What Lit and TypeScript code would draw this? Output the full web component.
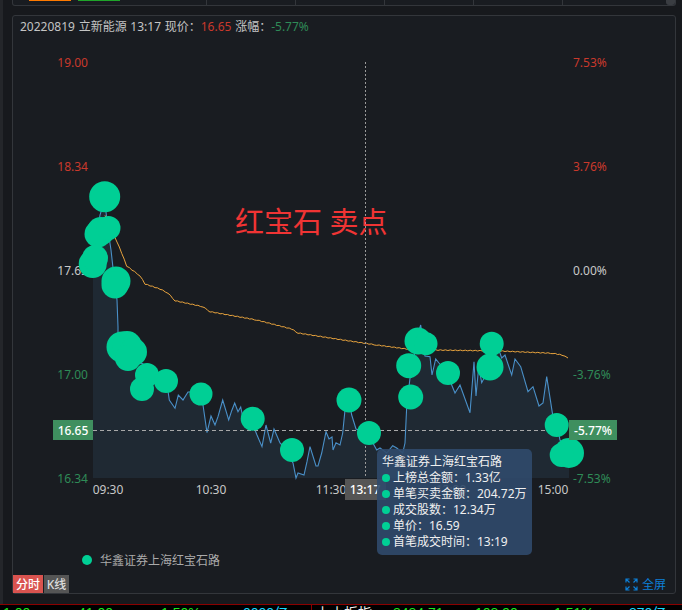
import { LitElement, html, css, svg } from "lit";
import { customElement } from "lit/decorators.js";

const price: number[][] = [[93,265],[96,240],[100,215],[103,205],[105,196],[106,212],[108,230],[111,250],[113,268],[115,285],[117,300],[118,327],[118,345],[125,352],[135,360],[147,366],[150,368],[156,375],[166,380],[168,391],[169.3,400],[175,408.3],[178.3,395],[183,400],[188,392],[193,392],[201,394],[203,405],[207,432.7],[211,416],[215,425],[218,416.7],[222.7,400],[228.7,420],[231.7,410.7],[234.7,403],[238,411.7],[240.7,407],[243,418],[252,420],[255,430],[257,435],[262,446.7],[266,425],[270.7,443],[274,429],[280,443],[285,448],[293,463],[296,478],[298,473],[304,475],[307,461.7],[310,446.7],[316,466],[318,466],[321.7,453],[326,431.7],[329,439],[332,437],[333,450],[336,442.7],[340,445],[342.7,433],[345,410],[349,400],[351.7,415],[356,429],[369,433],[374,445],[376.7,450],[380,448],[386.7,453],[392.7,445.7],[396.7,448],[402.7,453],[405,443],[406.7,406.7],[410,378],[411.7,376.7],[416,340],[420.7,325],[425,356],[430,356.7],[432,375],[435.7,359],[439,363],[448,373],[451.7,385],[455,393],[460,385],[470,412.7],[474,361.7],[476,396],[478.7,366.7],[481.7,382.7],[490,367],[495,345],[500,353],[501.7,358],[505,355],[511.7,375],[515,359],[520.7,366.7],[528,391.7],[533,386.7],[539,406],[543,403],[546.7,376.7],[552.7,415],[557,425],[560,440],[569,453]];

const avgKnots: number[][] = [[105,215],[117,241.7],[121.7,253],[126.7,266],[140,275.7],[145,284],[160,289],[168,293],[175,300.7],[203,306.7],[210,311.7],[240,317],[256.7,320],[291.7,329],[298,333],[343,340],[376.7,345],[406.7,349],[433,350],[500,351],[553,353.3],[562,355],[568,358]];

// The average line in the reference climbs in small steps, so each knot span is cut into short stepped runs.
const avg: number[][] = avgKnots.flatMap((p, i) => {
  const next = avgKnots[i + 1];
  if (!next) return [p];
  const out: number[][] = [];
  const n = Math.max(1, Math.round((next[0] - p[0]) / 2.5));
  for (let k = 0; k < n; k++) {
    const x = p[0] + ((next[0] - p[0]) * k) / n;
    const y = p[1] + ((next[1] - p[1]) * k) / n;
    out.push([x, y + (k % 2 === 0 ? 0.35 : -0.35)]);
  }
  return out;
});

const bubbles: number[][] = [[104.7,196.7,15.5],[98,234,13.5],[101,231,14],[108.5,228,12],[92.7,264,14],[95,258,13],[116,281,14.5],[115,285,13.5],[122,347,15.5],[127,346,15],[133,352,14],[128,358,13],[147,375,12],[142,389,12],[166,381,12],[201,394,11.5],[252.7,418.7,12],[292,450,12],[349,400,12.5],[369,433,12],[408.7,365.7,12.5],[410.7,397,12.5],[418,341,13.5],[426,343.7,11.5],[448,373,12],[491.7,343.7,12],[490,367,13.5],[556.7,425,12],[569,453,15],[561.7,455,12]];

const leftLabels: [string, number, string][] = [["19.00",62,"red"],["18.34",166,"red"],["17.65",270,"neutral"],["17.00",374,"green"],["16.34",478,"green"]];
const rightLabels: [string, number, string][] = [["7.53%",62,"red"],["3.76%",166,"red"],["0.00%",270,"neutral"],["-3.76%",374,"green"],["-7.53%",478,"green"]];
const timeLabels: [string, number][] = [["09:30",108],["10:30",211],["11:30",331],["12:00",451],["15:00",553]];
const tooltipRows = ["上榜总金额：1.33亿","单笔买卖金额：204.72万","成交股数：12.34万","单价：16.59","首笔成交时间：13:19"];
const ticker: [string, string][] = [["1.00","g"],["41.00","g"],["1.50%","g"],["0000亿","c"],["上小板指","w"],["8484.71","g"],["108.90","g"],["1.51%","g"],["870亿","c"]];

const pts = (a: number[][]) => a.map((p) => p.join(",")).join(" ");

@customElement("app-root")
export class AppRoot extends LitElement {
  static styles = css`
    :host {
      display: block;
      width: 682px;
      height: 610px;
      overflow: hidden;
      background: #17191d;
      font-family: "Noto Sans", "Noto Sans CJK SC", sans-serif;
      font-size: 12px;
    }
    .shell {
      height: 604px;
      box-sizing: border-box;
      padding: 0 6px 0 9px;
      display: flex;
      flex-direction: column;
      gap: 9px;
      border-left: 3px solid #24262a;
    }
    .strip {
      height: 6px;
      flex: none;
      box-sizing: border-box;
      border: 1px solid #33363b;
      border-top: 0;
      border-radius: 0 0 3px 3px;
      background: #191c21;
      display: flex;
    }
    .tab {
      width: 42px;
      height: 1px;
    }
    .tab.orange { background: #ff7a00; margin-left: 16px; }
    .tab.lime { background: #1fa52a; margin-left: 7px; }
    .cells {
      margin-left: 86px;
      display: flex;
      flex: 1;
    }
    .cell {
      width: 89px;
      flex: none;
      height: 5px;
      border-left: 1px solid #33363b;
      box-sizing: border-box;
    }
    .thumb {
      width: 9px;
      height: 5px;
      background: #3a3d42;
      margin-left: auto;
      border-radius: 0 0 3px 3px;
    }
    .panel {
      height: 579px;
      flex: none;
      box-sizing: border-box;
      border: 1px solid #33363b;
      border-radius: 3px;
      background: #191c21;
      display: flex;
      flex-direction: column;
    }
    .head {
      height: 22px;
      flex: none;
      padding: 3px 0 0 7px;
      box-sizing: border-box;
      line-height: 16px;
      color: #c4c4c4;
      white-space: pre;
      word-spacing: 0.6px;
    }
    .head .r { color: #c9392c; }
    .head .g { color: #2f8b57; }
    .chart {
      position: relative;
      height: 534px;
      flex: none;
    }
    .chart svg {
      display: block;
    }
    .lbl {
      font-size: 12px;
      dominant-baseline: central;
    }
    .lbl.red { fill: #c9392c; }
    .lbl.green { fill: #2f8b57; }
    .lbl.neutral { fill: #c8c8c8; }
    .lbl.time { fill: #c8c8c8; text-anchor: middle; }
    .lbl.box { fill: #fff; font-weight: 500; text-anchor: middle; }
    .lbl.legend { fill: #aaa; }
    .note {
      font-size: 29px;
      fill: #f03434;
      dominant-baseline: central;
    }
    .tip {
      position: absolute;
      left: 364px;
      top: 411px;
      width: 155px;
      height: 106px;
      box-sizing: border-box;
      padding: 5px;
      border-radius: 5px;
      background: rgba(48, 74, 108, 0.9);
      color: #f0f0f0;
      line-height: 16px;
      white-space: nowrap;
    }
    .row {
      display: flex;
      align-items: center;
      gap: 3px;
    }
    .dot {
      width: 8px;
      height: 8px;
      border-radius: 50%;
      background: #00cf95;
      flex: none;
    }
    .foot {
      flex: 1;
      display: flex;
      align-items: stretch;
      gap: 1px;
    }
    .btn {
      display: flex;
      align-items: center;
      justify-content: center;
      color: #fff;
      font-weight: 500;
      height: 18px;
      align-self: flex-end;
    }
    .btn.on { width: 30px; background: #d9534f; }
    .btn.off { width: 25px; background: #555; color: #ddd; }
    .full {
      margin-left: auto;
      margin-right: 9px;
      align-self: flex-end;
      height: 18px;
      display: flex;
      align-items: center;
      gap: 4px;
      color: #0d7fd6;
    }
    .ticker {
      height: 6px;
      border-top: 1px solid #8b0000;
      background: #000;
      display: grid;
      grid-template-columns: 75px 83px 82px 68px 5px 77px 82px 79px 75px 53px;
      padding-left: 3px;
      overflow: hidden;
      font-family: "Liberation Sans", "Noto Sans CJK SC", sans-serif;
      font-size: 14px;
      line-height: 16px;
    }
    .ticker .g { color: #1ee81e; }
    .ticker .c { color: #19d7ff; }
    .ticker .w { color: #eee; }
    .ticker .sep { border-left: 1px solid #8b0000; }
  `;

  render() {
    return html`
      <div class="shell">
        <div class="strip">
          <div class="tab orange"></div>
          <div class="tab lime"></div>
          <div class="cells">
            <div class="cell"></div><div class="cell"></div><div class="cell"></div><div class="cell"></div><div class="cell"></div>
            <div class="thumb"></div>
          </div>
        </div>
        <div class="panel">
          <div class="head">20220819 立新能源 13:17 现价：<span class="r">16.65</span> 涨幅：<span class="g">-5.77%</span></div>
          <div class="chart">
            <svg width="662" height="534" viewBox="13 38 662 534">
              ${leftLabels.map(([t, y, c]) => svg`<text class="lbl ${c}" x="88" y=${y} text-anchor="end">${t}</text>`)}
              ${rightLabels.map(([t, y, c]) => svg`<text class="lbl ${c}" x="573" y=${y}>${t}</text>`)}
              ${timeLabels.map(([t, x]) => svg`<text class="lbl time" x=${x} y="489">${t}</text>`)}
              <polygon points="${pts(price)} 569,478 93,478" fill="#1f2933"></polygon>
              <polyline points=${pts(avg)} fill="none" stroke="#e8a33d" stroke-width="1"></polyline>
              <polyline points=${pts(price)} fill="none" stroke="#4a90c8" stroke-width="1.1"></polyline>
              <line x1="365.5" y1="62" x2="365.5" y2="478" stroke="#9a9a9a" stroke-dasharray="2 2"></line>
              <line x1="93" y1="430.5" x2="569" y2="430.5" stroke="#a8a8a8" stroke-dasharray="4 3"></line>
              ${bubbles.map(([x, y, r]) => svg`<circle cx=${x} cy=${y} r=${r} fill="#00cf95"></circle>`)}
              <rect x="53" y="420" width="40" height="20" fill="#3f8f5f"></rect>
              <text class="lbl box" x="73" y="430">16.65</text>
              <rect x="569" y="420" width="48" height="20" fill="#3f8f5f"></rect>
              <text class="lbl box" x="593" y="430">-5.77%</text>
              <rect x="345" y="479" width="41" height="21" fill="#555"></rect>
              <text class="lbl box" x="365" y="489">13:17</text>
              <text class="note" x="235" y="221">红宝石 卖点</text>
              <circle cx="87" cy="560" r="5" fill="#00cf95"></circle>
              <text class="lbl legend" x="100" y="560">华鑫证券上海红宝石路</text>
            </svg>
            <div class="tip">
              <div>华鑫证券上海红宝石路</div>
              ${tooltipRows.map((r) => html`<div class="row"><span class="dot"></span><span>${r}</span></div>`)}
            </div>
          </div>
          <div class="foot">
            <div class="btn on">分时</div>
            <div class="btn off">K线</div>
            <div class="full">
              <svg width="13" height="13" viewBox="0 0 13 13" fill="none" stroke="#0d7fd6" stroke-width="1.2">
                <path d="M1 4.5V1H4.5M1 1L4.5 4.5M8.5 1H12V4.5M12 1L8.5 4.5M1 8.5V12H4.5M1 12L4.5 8.5M8.5 12H12V8.5M12 12L8.5 8.5"></path>
              </svg>
              <span>全屏</span>
            </div>
          </div>
        </div>
      </div>
      <div class="ticker">
        ${ticker.slice(0, 4).map(([t, c]) => html`<div class=${c}>${t}</div>`)}
        <div class="sep"></div>
        ${ticker.slice(4).map(([t, c]) => html`<div class=${c}>${t}</div>`)}
      </div>
    `;
  }
}
